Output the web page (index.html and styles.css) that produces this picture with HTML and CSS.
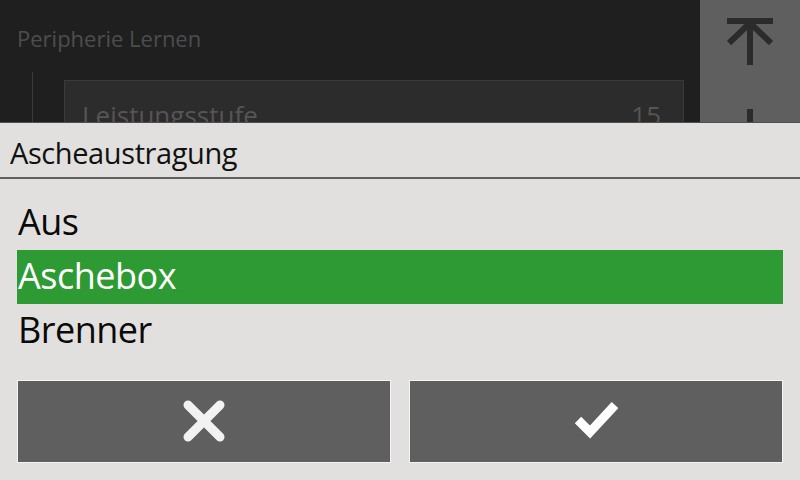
FILE: index.html
```html
<!DOCTYPE html>
<html lang="de">
<head>
<meta charset="UTF-8" />
<meta name="viewport" content="width=device-width, initial-scale=1" />
<title>Peripherie Lernen</title>
<link rel="stylesheet" href="styles.css">
</head>
<body>

<div class="screen">
  <div class="main">
    <div class="page-title">Peripherie Lernen</div>
    <div class="tree">
      <div class="param-row">
        <span class="param-name">Leistungsstufe</span>
        <span class="param-value">15</span>
      </div>
    </div>
  </div>

  <!-- scroll buttons on the right -->
  <div class="side-bar">
    <button class="side-btn" aria-label="Nach oben">
      <svg width="46" height="48" viewBox="0 0 46 48">
        <path d="M0 3H46M23 6V47M2 25L23 5L44 25" fill="none" stroke="#2b2b2b" stroke-width="6"/>
      </svg>
    </button>
    <button class="side-btn side-btn-down" aria-label="Nach unten">
      <svg width="46" height="48" viewBox="0 0 46 48">
        <path d="M0 45H46M23 42V1M2 23L23 43L44 23" fill="none" stroke="#2b2b2b" stroke-width="6"/>
      </svg>
    </button>
  </div>
</div>

<!-- selection dialog -->
<div class="dialog" role="dialog" aria-label="Ascheaustragung">
  <div class="dialog-title">Ascheaustragung</div>
  <ul class="option-list">
    <li class="option">Aus</li>
    <li class="option selected">Aschebox</li>
    <li class="option">Brenner</li>
  </ul>
  <div class="dialog-buttons">
    <button class="dialog-btn" aria-label="Abbrechen">
      <svg width="44" height="44" viewBox="0 0 44 44">
        <path d="M6 6L38 38M38 6L6 38" stroke="#f2f2f2" stroke-width="9" stroke-linecap="round"/>
      </svg>
    </button>
    <button class="dialog-btn" aria-label="OK">
      <svg width="44" height="42" viewBox="0 0 44 42">
        <path d="M4 20L16 32L41 5" fill="none" stroke="#fff" stroke-width="9"/>
      </svg>
    </button>
  </div>
</div>

</body>
</html>
```

FILE: styles.css
```css
* {
  box-sizing: border-box;
}
body {
  margin: 0;
  width: 800px;
  height: 480px;
  overflow: hidden;
  position: relative;
  font-family: 'Open Sans', 'Noto Sans', sans-serif;
  background: #1f1f1f;
}

.screen {
  display: flex;
  height: 100%;
}
.main {
  flex: 1;
}
.page-title {
  margin-top: 23px;
  padding-left: 17px;
  font-size: 22px;
  line-height: 30px;
  color: #4d4d4d;
}

/* tree with parameter rows */
.tree {
  margin: 19px 16px 0 32px;
  padding: 8px 0 0 31px;
  border-left: 1px solid #3a3a3a;
  height: 200px;
}
.param-row {
  display: flex;
  justify-content: space-between;
  padding: 17px 22px 0 17px;
  height: 80px;
  background: #2c2c2c;
  border: 1px solid #3a3a3a;
  font-size: 26px;
  line-height: 34px;
  color: #555;
}

/* right scroll column */
.side-bar {
  width: 100px;
  background: #5f5f5f;
  display: flex;
  flex-direction: column;
  align-items: center;
  padding-top: 18px;
}
.side-btn {
  background: none;
  border: none;
  padding: 0;
  display: block;
}
.side-btn svg {
  display: block;
}
.side-btn-down {
  margin-top: 42px;
}

/* dialog */
.dialog {
  position: absolute;
  top: 122px;
  left: 0;
  right: 0;
  bottom: 0;
  background: #e1e0de;
  border-top: 1px solid #4f4f4f;
}
.dialog-title {
  padding: 6px 10px 0;
  font-size: 29px;
  line-height: 48px;
  letter-spacing: -0.4px;
  color: #111;
  border-bottom: 2px solid #5f5f5f;
}
.option-list {
  list-style: none;
  margin: 17px 17px 0;
  padding: 0;
}
.option {
  height: 54px;
  padding: 0 0 2px 1px;
  font-size: 36px;
  line-height: 52px;
  letter-spacing: -0.5px;
  color: #0a0a0a;
}
.option.selected {
  background: #2e9a33;
  color: #fff;
}
.dialog-buttons {
  display: grid;
  grid-template-columns: 1fr 1fr;
  gap: 18px;
  margin: 22px 17px 0;
}
.dialog-btn {
  height: 83px;
  background: #5f5f5f;
  border: 1px solid #f4f4f4;
  display: flex;
  justify-content: center;
  align-items: center;
  padding: 0 0 2px;
}
.dialog-btn svg {
  display: block;
}
```
